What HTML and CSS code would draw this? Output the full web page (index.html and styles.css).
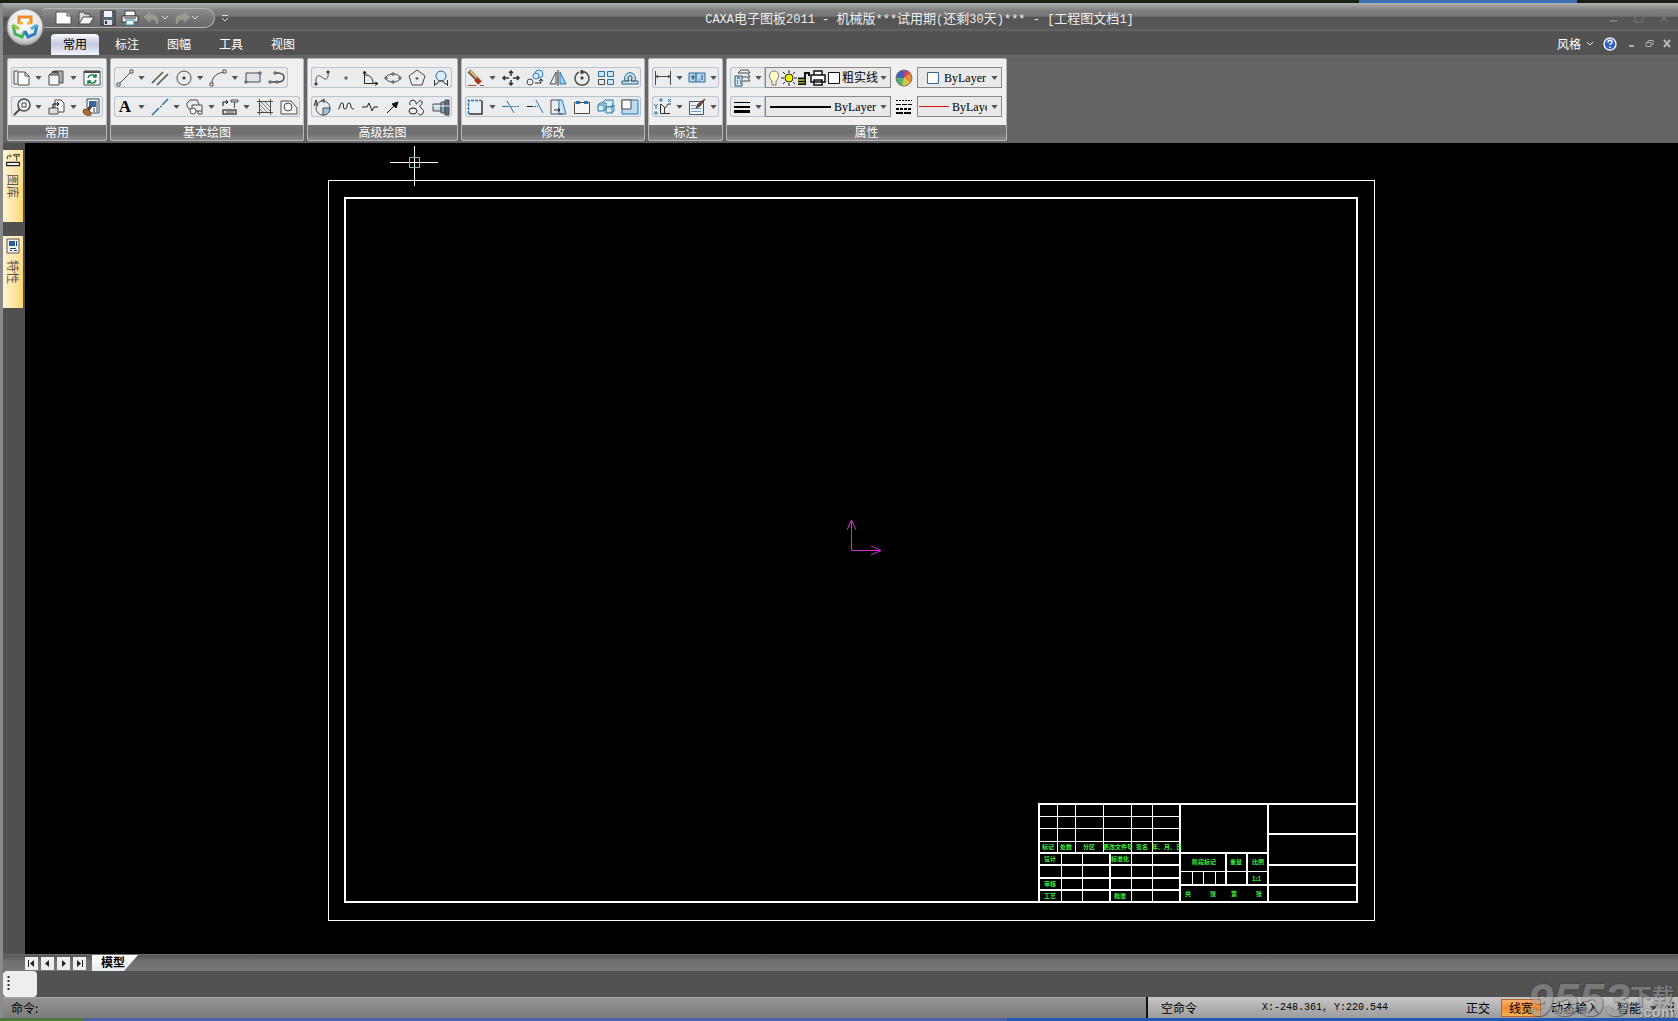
FILE: index.html
```html
<!DOCTYPE html>
<html lang="zh-CN">
<head>
<meta charset="utf-8">
<title>CAXA电子图板2011</title>
<link rel="stylesheet" href="styles.css">
</head>
<body>
<div class="desktop-top"></div>
<div class="window">
  <header class="titlebar">
    <button class="orb" aria-label="主菜单"><svg width="38" height="38" viewBox="0 0 38 38">
      <defs><radialGradient id="orb" cx=".5" cy=".35" r=".65"><stop offset="0" stop-color="#fff"/><stop offset=".7" stop-color="#e4e4e4"/><stop offset="1" stop-color="#a9a9a9"/></radialGradient></defs>
      <circle cx="19" cy="19" r="18" fill="url(#orb)" stroke="#8a8a8a"/>
      <g fill="none" stroke-width="3"><path d="M13 16V9h12v7" stroke="#ef8a2c"/><path d="M13 15h4M25 15h-4" stroke="#f5b63a"/><path d="M7 17l2 9 7 3 3-6" stroke="#45b45a"/><path d="M7 17l6 4" stroke="#9acb3c"/><path d="M31 17l-2 9-7 3-3-6" stroke="#2c7fc4"/><path d="M31 17l-6 4" stroke="#46b7d8"/></g></svg></button>
    <nav class="quick" aria-label="快速访问">
      <button aria-label="新建"><svg width="18" height="16" viewBox="0 0 18 16"><path d="M1 2h11l4 4v8H1z" fill="#fff" stroke="#555"/><path d="M12 2v4h4" fill="#ccc" stroke="#555"/></svg></button>
      <button aria-label="打开"><svg width="18" height="16" viewBox="0 0 18 16"><path d="M2 14V2h5l1 2h5v3" fill="#d8d8d8" stroke="#444"/><path d="M2 14l4-7h11l-4 7z" fill="#f4f4f4" stroke="#444"/></svg></button>
      <button aria-label="保存"><svg width="18" height="16" viewBox="0 0 18 16"><path d="M2 1h14v14H2z" fill="#5c6670" stroke="#333"/><path d="M5 1h8v6H5z" fill="#eef3f8"/><path d="M5 10h8v5H5z" fill="#dde"/><path d="M7 11v3" stroke="#333" stroke-width="2"/></svg></button>
      <button aria-label="打印"><svg width="18" height="16" viewBox="0 0 18 16"><path d="M4 1h10v5H4z" fill="#fff" stroke="#444"/><path d="M1 6h16v6H1z" fill="#eee" stroke="#333"/><path d="M5 10h8v5H5z" fill="#dff3f6" stroke="#3b8d98"/><path d="M3 8h12" stroke="#333"/></svg></button>
      <button class="pair" aria-label="撤销"><svg width="18" height="16" viewBox="0 0 18 16"><path d="M1 7l6-5v3c6-1 10 3 7 9-1-4-3-5-7-5v3z" fill="#9b998c" stroke="#9b998c"/></svg><svg class="chev" width="7" height="5" viewBox="0 0 7 5"><path d="M0 1l3 3 3-3" fill="none" stroke="#ddd"/></svg></button>
      <button class="pair" aria-label="重做"><svg width="18" height="16" viewBox="0 0 18 16"><path d="M17 7l-6-5v3c-6-1-10 3-7 9 1-4 3-5 7-5v3z" fill="#9b998c" stroke="#9b998c"/></svg><svg class="chev" width="7" height="5" viewBox="0 0 7 5"><path d="M0 1l3 3 3-3" fill="none" stroke="#ddd"/></svg></button>
    </nav>
    <button class="more" aria-label="自定义"><svg width="7" height="8" viewBox="0 0 7 8"><path d="M0 1.500h6M0 4l3 3 3-3" fill="none" stroke="#ddd"/></svg></button>
    <h1><span>CAXA</span>电子图板<span>2011 - </span>机械版<span>***</span>试用期<span>(</span>还剩<span>30</span>天<span>)*** - [</span>工程图文档<span>1]</span></h1>
    <div class="win-ctl">
      <button aria-label="最小化"><svg width="10" height="10"><path d="M1 8h7" stroke="#7d7d7d" stroke-width="2"/></svg></button>
      <button aria-label="最大化"><svg width="10" height="10"><path d="M1 1h8v8H1zM1 2h8" stroke="#777" fill="none"/></svg></button>
      <button aria-label="关闭"><svg width="10" height="10"><path d="M1 1l8 8M9 1l-8 8" stroke="#7d7d7d"/></svg></button>
    </div>
  </header>

  <nav class="tabs">
    <a class="tab active" href="#home">常用</a><a class="tab" href="#dim">标注</a><a class="tab" href="#sheet">图幅</a><a class="tab" href="#tools">工具</a><a class="tab" href="#view">视图</a>
    <div class="tab-right">
      <button class="style-btn">风格 <svg width="7" height="5" viewBox="0 0 7 5"><path d="M0 1l3 3 3-3" fill="none" stroke="#eee"/></svg></button>
      <button class="help" aria-label="帮助"><svg width="14" height="14" viewBox="0 0 14 14"><circle cx="7" cy="7" r="6" fill="#2e62c9" stroke="#e8efff" stroke-width="1.500"/><path d="M5 5.500c0-3 4-3 4-.500 0 1.500-2 1.500-2 3" fill="none" stroke="#fff" stroke-width="1.500"/><path d="M7 9.500v1.500" stroke="#fff" stroke-width="1.500"/></svg></button>
      <button aria-label="最小化文档"><svg width="9" height="9"><path d="M2 7h5" stroke="#aaa" stroke-width="2"/></svg></button>
      <button aria-label="还原文档"><svg width="9" height="9"><path d="M1 3.500h5v4H1zM3 3V1.500h5v4H6" stroke="#aaa" fill="none"/></svg></button>
      <button aria-label="关闭文档"><svg width="9" height="9"><path d="M1 1l6 7M7 1L1 8" stroke="#b5b5b5" stroke-width="2"/></svg></button>
    </div>
  </nav>

  <section class="ribbon" id="home">
    <section class="panel">
      <div class="rows">
        <div class="row">
          <button class="split" aria-label="复制"><svg class="i" viewBox="0 0 20 18"><path d="M6 2H2v13h3"/><path d="M6 3h7l4 4v9H6z" fill="#fff"/><path d="M13 3v4h4"/></svg><i></i></button>
          <button class="split" aria-label="粘贴"><svg class="i" viewBox="0 0 20 18"><path d="M7 4V2h9v12h-3z" fill="#aaa"/><path d="M2 6l4-3h5v4" fill="#999"/><path d="M2 6h10v10H2z" fill="#f5f5f5"/><path d="M5 3h6" stroke-width="2"/></svg><i></i></button>
          <button aria-label="刷新"><svg class="i" viewBox="0 0 20 18"><path d="M2 2h16v14H2z" fill="#fff"/><path d="M2 3h16" stroke-width="2"/><path d="M6 9c1-4 6-4 8-1M14 5v3h-3M14 11c-1 4-6 4-8 1M6 15v-3h3" stroke="#148044" stroke-width="1.500"/></svg></button>
        </div>
        <div class="row">
          <button class="split" aria-label="缩放"><svg class="i" viewBox="0 0 20 18"><circle cx="12" cy="7" r="6" fill="#eef4fa" stroke-width="1.500"/><path d="M10 5h4v4h-4z"/><path d="M8 11l-6 6" stroke-width="2"/></svg><i></i></button>
          <button class="split" aria-label="移动视图"><svg class="i" viewBox="0 0 20 18"><path d="M8 2h6l3 3v9H8z" fill="#f5f5f5"/><path d="M2 10h9v6H2z" fill="#ddd"/><path d="M6 10V6h6M10 4l2 2-2 2" stroke="#000"/></svg><i></i></button>
          <button aria-label="格式刷"><svg class="i" viewBox="0 0 20 18"><path d="M5 1h12v14H5z" fill="#fff" stroke="#345"/><path d="M7 3h7v6H7z" fill="#35679e" stroke="none"/><path d="M12 10v4M15 3v11" stroke="#345"/><path d="M9 8l-3 4" stroke="#444" stroke-width="3"/><path d="M2 11l6 2 1 4c-3 1-7 0-8-3z" fill="#b26c34" stroke="#8a4a1a"/></svg></button>
        </div>
      </div>
      <h2>常用</h2>
    </section>

    <section class="panel">
      <div class="rows">
        <div class="row short">
          <button class="split" aria-label="直线"><svg class="i" viewBox="0 0 20 18"><path d="M4 15L16 3" stroke="#554"/><path d="M2 14h3v3H2zM15 1h3v3h-3z" fill="#fff"/></svg><i></i></button>
          <button aria-label="平行线"><svg class="i" viewBox="0 0 20 18"><path d="M2 14L13 3M7 16L18 5" stroke="#554" stroke-width="1.500"/></svg></button>
          <button class="split" aria-label="圆"><svg class="i" viewBox="0 0 20 18"><circle cx="10" cy="9" r="7"/><path d="M9 8h2v2H9z" fill="#333"/></svg><i></i></button>
          <button class="split" aria-label="圆弧"><svg class="i" viewBox="0 0 20 18"><path d="M4 14C4 8 9 4 16 3"/><path d="M2 14h3v3H2zM15 1h3v3h-3z" fill="#fff"/></svg><i></i></button>
          <button aria-label="矩形"><svg class="i" viewBox="0 0 20 18"><path d="M3 4h14v9H3z" fill="#dfe2ea"/><path d="M2 12h2v2H2zM16 3h2v2h-2z" fill="#fff"/></svg></button>
          <button aria-label="多段线"><svg class="i" viewBox="0 0 20 18"><path d="M3 13h8c8 0 8-9 0-9H8" stroke-width="1.500"/><path d="M2 12h2v2H2zM9 12h2v2H9zM7 3h2v2H7z" fill="#fff"/></svg></button>
        </div>
        <div class="row">
          <button class="split" aria-label="文字"><b class="letter">A</b><i></i></button>
          <button class="split" aria-label="中心线"><svg class="i" viewBox="0 0 20 18"><path d="M2 17l7-7M12 7l6-6" stroke="#2b6cb0" stroke-width="1.500"/><path d="M10 8.500h1.500" stroke="#222"/></svg><i></i></button>
          <button class="split" aria-label="块"><svg class="i" viewBox="0 0 20 18"><path d="M5 2h7l2 4v5H4L2 8V5z"/><path d="M7 7h10v6H7z" fill="#eee"/><circle cx="8" cy="13" r="3" fill="#fff"/><path d="M13 13v3h4v-3"/></svg><i></i></button>
          <button class="split" aria-label="图库"><svg class="i" viewBox="0 0 20 18"><path d="M3 8V4h4M6 2l2 2-2 2" stroke="#111"/><path d="M11 2h7v2h-7zM14.500 4v6"/><path d="M3 12h13v4H3z" stroke-width="1.500"/><path d="M6 14h8"/></svg><i></i></button>
          <button aria-label="填充"><svg class="i" viewBox="0 0 20 18"><path d="M4.500 1v16M15.500 1v16M2 3.500h16M2 14.500h16"/><path d="M5 7l7 7M5 11l3 3M6 4l9 9M10 4l5 5" stroke="#777"/></svg></button>
          <button aria-label="局部放大"><svg class="i" viewBox="0 0 20 18"><path d="M2 3h10l6 7v6H2z" fill="#f4f4f4"/><circle cx="9" cy="9" r="4"/></svg></button>
        </div>
      </div>
      <h2>基本绘图</h2>
    </section>

    <section class="panel">
      <div class="rows inset">
        <div class="row">
          <button aria-label="样条"><svg class="i" viewBox="0 0 20 18"><path d="M4 15C3 3 9 7 11 9s6 2 5-6"/><path d="M3 14h2v2H3zM15 2h2v2h-2z" fill="#222"/></svg></button>
          <button aria-label="点"><svg class="i" viewBox="0 0 20 18"><path d="M9 8h2v2H9z"/></svg></button>
          <button aria-label="公式曲线"><svg class="i" viewBox="0 0 20 18"><path d="M4.500 2v12.500H18M3 5l1.500-3 2 3M15 13l3 1.500-3 2M5 6c5 0 8 3 8 8" stroke="#222"/></svg></button>
          <button aria-label="椭圆"><svg class="i" viewBox="0 0 20 18"><ellipse cx="10" cy="9" rx="7" ry="4"/><path d="M2 8h2v2H2zM16 8h2v2h-2zM9 4h2v2H9zM9 12h2v2H9z" fill="#fff"/></svg></button>
          <button aria-label="正多边形"><svg class="i" viewBox="0 0 20 18"><path d="M10 1l8 6-3 9H5L2 7z"/><path d="M9 9h2v1H9z" fill="#222"/></svg></button>
          <button aria-label="圆弧齿形"><svg class="i" viewBox="0 0 20 18"><circle cx="10" cy="7" r="5" fill="#d9eefc" stroke="#2d6796"/><path d="M3.500 11v6M16.500 11v6M3 15h3l2-3h4l2 3h3" stroke="#333"/></svg></button>
        </div>
        <div class="row">
          <button aria-label="圆弧标记"><svg class="i" viewBox="0 0 20 18"><circle cx="11" cy="10" r="7"/><path d="M11 10h7c0 4-2 7-7 7z" fill="#9ec4dd"/><path d="M2 8l2-6 2 6M3 6h2M9 3l3-2v4" stroke="#333"/></svg></button>
          <button aria-label="波浪线"><svg class="i" viewBox="0 0 20 18"><path d="M2 11c3 0 1-6 4-6s0 6 3 6 1-6 4-6 0 6 5 6" stroke="#222"/></svg></button>
          <button aria-label="折断线"><svg class="i" viewBox="0 0 20 18"><path d="M2 9h5l2-4 3 8 2-4h4" stroke="#222"/></svg></button>
          <button aria-label="箭头"><svg class="i" viewBox="0 0 20 18"><path d="M4 15l8-8" stroke="#111"/><path d="M15 4l-2 6-4-4z" fill="#111" stroke="#111"/></svg></button>
          <button aria-label="轮廓"><svg class="i" viewBox="0 0 20 18"><path d="M3 7c-2-6 6-6 6-2s4-6 6-1c1 3-4 3-1 6s3 2 2 5-4 2-5 0" stroke="#222"/><ellipse cx="6" cy="13" rx="4" ry="3" stroke="#222"/></svg></button>
          <button aria-label="轴孔"><svg class="i" viewBox="0 0 20 18"><path d="M2 6h8v7H2z" fill="#c9d7df"/><path d="M10 4h4v11h-4z" fill="#8ca8b8"/><path d="M14 2h4v15h-4z" fill="#4f7187"/><path d="M2 8h16" stroke="#f5f5f5"/></svg></button>
        </div>
      </div>
      <h2>高级绘图</h2>
    </section>

    <section class="panel">
      <div class="rows">
        <div class="row">
          <button class="split" aria-label="删除"><svg class="i" viewBox="0 0 20 18"><path d="M3 2l8 8" stroke="#6b5836" stroke-width="4"/><path d="M4 2l7 7" stroke="#e5bd76" stroke-width="2"/><path d="M10 10l4 4" stroke="#a33a1d" stroke-width="5"/><path d="M2 16.500h8M14 16.500h4" stroke="#b3492a"/></svg><i></i></button>
          <button aria-label="平移"><svg class="i" viewBox="0 0 20 18"><path d="M10 2v5M10 11v5M3 9h5M12 9h5M8 4l2-2 2 2M8 14l2 2 2-2M4 7L2 9l2 2M16 7l2 2-2 2" stroke="#333" stroke-width="1.500"/></svg></button>
          <button aria-label="平移复制"><svg class="i" viewBox="0 0 20 18"><circle cx="14" cy="5" r="4" fill="#d6ecfa" stroke="#2d78b0"/><circle cx="11" cy="7" r="3" fill="#d6ecfa" stroke="#2d78b0"/><circle cx="5" cy="13" r="3"/><path d="M10 14h6v-3M14 12l2-2 2 2" stroke="#222"/></svg></button>
          <button aria-label="镜像"><svg class="i" viewBox="0 0 20 18"><path d="M8 3v12H2z"/><path d="M12 3v12h6z" fill="#9fd0ee" stroke="#2d78b0"/><path d="M10 1v16" stroke="#222"/></svg></button>
          <button aria-label="旋转"><svg class="i" viewBox="0 0 20 18"><path d="M13 3a7 7 0 1 1-6 0" stroke-width="1.500"/><path d="M9 1l4 2-4 2z" fill="#333"/><path d="M9 8h2v2H9z" fill="#222"/></svg></button>
          <button aria-label="阵列"><svg class="i" viewBox="0 0 20 18"><path d="M2.500 2.500h6v5h-6zM11.500 2.500h6v5h-6zM11.500 10.500h6v5h-6z" fill="#c9e6f8" stroke="#2874a8"/><path d="M2.500 10.500h6v5h-6z"/></svg></button>
          <button aria-label="等距线"><svg class="i" viewBox="0 0 20 18"><path d="M2 15h16v-3h-3c3-11-13-11-10 0H2z" fill="#c9e6f8" stroke="#235f8b"/><path d="M5 12h4c-4-7 6-7 2 0h4" stroke="#222"/></svg></button>
        </div>
        <div class="row">
          <button class="split" aria-label="裁剪"><svg class="i" viewBox="0 0 20 18"><path d="M3 3h13v13H3z" fill="#e6f0f8" stroke="none"/><path d="M3 16h13V3" stroke="#333" stroke-width="1.500"/><path d="M2.500 16V2.500H17" stroke="#2775ae" stroke-width="1.500" stroke-dasharray="3 1"/></svg><i></i></button>
          <button aria-label="打断"><svg class="i" viewBox="0 0 20 18"><path d="M1 8.500h7M6 3l7 12" stroke="#2775ae"/><path d="M10 8.500h8" stroke="#2775ae" stroke-dasharray="2 1"/></svg></button>
          <button aria-label="延伸"><svg class="i" viewBox="0 0 20 18"><path d="M2 8.500h6" stroke="#222"/><path d="M9 8.500h4" stroke="#2775ae" stroke-dasharray="2 1"/><path d="M11 2l7 13" stroke="#2775ae"/></svg></button>
          <button aria-label="拉伸"><svg class="i" viewBox="0 0 20 18"><path d="M11 2h3l4 14h-7z" fill="#c9e6f8" stroke="#2775ae"/><path d="M11 2H3v14h12"/><path d="M6 12h6M10 10l2 2-2 2" stroke="#222"/></svg></button>
          <button aria-label="过渡"><svg class="i" viewBox="0 0 20 18"><path d="M4 4.500H2.500v11h15v-11H16" fill="#f4f4f4"/><path d="M8 4.500h4"/><path d="M4 3h4v3H4zM12 3h4v3h-4z" fill="#2874a8" stroke="none"/></svg></button>
          <button aria-label="分解"><svg class="i" viewBox="0 0 20 18"><path d="M6 5l3-3h8v5l-3 2H6z" fill="#d9edf9" stroke="#2874a8"/><path d="M2 7h6v6H2zM10 9h6v6h-6zM16 9l2-2v6l-2 2M2 7l2-2h6v6l-2 2" fill="#d9edf9" stroke="#2874a8"/></svg></button>
          <button aria-label="缩放图形"><svg class="i" viewBox="0 0 20 18"><path d="M2 2h16v14H2z" fill="#b9dcf2" stroke="#2874a8"/><path d="M2 2h9v9H2z" fill="#fff"/></svg></button>
        </div>
      </div>
      <h2>修改</h2>
    </section>

    <section class="panel">
      <div class="rows">
        <div class="row">
          <button class="split" aria-label="尺寸标注"><svg class="i" viewBox="0 0 20 18"><path d="M2.500 2v14M17.500 2v14M3 7.500h14M5 6L3 7.500l2 1.500M15 6l2 1.500-2 1.500"/></svg><i></i></button>
          <button class="split" aria-label="形位公差"><svg class="i" viewBox="0 0 20 18"><path d="M2 4h16v9H2z" fill="#b5d4ec" stroke="#2e6a9a"/><path d="M9 4v9M4 8h4M6 6v5M12 11h1M15 6v5" stroke="#174a75"/></svg><i></i></button>
        </div>
        <div class="row">
          <button class="split" aria-label="坐标标注"><svg class="i" viewBox="0 0 20 18"><path d="M7.500 6v9.500H17M8 6l4 4 3-4h3M11.500 10v5" stroke="#333"/><path d="M7 1h2v2H7zM2 14h2v2H2zM15 1l3 3M18 1l-3 3M1 6l2 2 2-2M3 8v3" stroke="#2874a8"/></svg><i></i></button>
          <button class="split" aria-label="标注编辑"><svg class="i" viewBox="0 0 20 18"><path d="M2.500 3.500h14v13h-14z" fill="#eef5fb" stroke="#456"/><path d="M4 7.500h5M4 10.500h10M4 13.500h10" stroke="#6c9cc2"/><path d="M9 10l2-4 7-5-5 7z" fill="#8b4a2b" stroke="#533"/></svg><i></i></button>
        </div>
      </div>
      <h2>标注</h2>
    </section>

    <section class="panel">
      <div class="rows props">
        <div class="prop-row">
          <button class="split cell" aria-label="图层"><svg class="i" viewBox="0 0 20 18"><path d="M6 4l3-3h7l2 3zM9 8h9l-2-3M11 12h7l-2-3"/><path d="M3 7h7v10H3z" fill="#cfe4f3" stroke="#356"/><path d="M5 9h3M5 12h1M8 12h1M5 14h1M8 14h1" stroke="#135"/></svg><i></i></button>
          <label class="combo layer"><select aria-label="当前图层"><option>粗实线</option></select>
            <svg width="72" height="18" viewBox="0 0 72 18"><path d="M4 12c-5-5-2-10 2-10s7 5 2 10v4H4z" fill="#fff8c8" stroke="#777"/><circle cx="21" cy="9" r="4" fill="#f5f500" stroke="#222"/><path d="M21 1v3M21 14v3M13 9h3M26 9h3M15 3l2 2M25 13l2 2M27 3l-2 2M15 15l2-2" stroke="#222"/><path d="M30 9.500h8M30 12.500h8M30 15h8M37 14V4h4v3" fill="none" stroke="#111" stroke-width="2"/><path d="M30 11h7M30 14h7" stroke="#aa0"/><path d="M46 6V2h8v4M43 6h14v7H43zM46 11h8v5h-8z" fill="#fff" stroke="#111" stroke-width="1.500"/><path d="M60.500 3.500h11v11h-11z" fill="#fff" stroke="#111"/></svg><i></i></label>
          <button class="ico" aria-label="颜色"><svg class="i" viewBox="0 0 20 18"><g stroke="none"><path d="M10 9V1a8 8 0 0 1 7 4z" fill="#df5c2b"/><path d="M10 9l7-4a8 8 0 0 1-1 9z" fill="#e78d3b"/><path d="M10 9l6 5a8 8 0 0 1-8 3z" fill="#d8c83a"/><path d="M10 9l-2 8a8 8 0 0 1-6-8z" fill="#57b06b"/><path d="M10 9H2a8 8 0 0 1 8-8z" fill="#4062be"/><path d="M10 9V1a8 8 0 0 1 4 1z" fill="#c33a87"/></g><circle cx="10" cy="9" r="8" stroke="#777"/></svg></button>
          <label class="combo color"><select aria-label="颜色设置"><option>ByLayer</option></select>
            <svg width="14" height="14"><path d="M1.500 1.500h11v11h-11z" fill="#fff" stroke="#336699"/></svg><i></i></label>
        </div>
        <div class="prop-row">
          <button class="split cell" aria-label="线宽"><svg class="i" viewBox="0 0 20 18"><path d="M2 4.500h16" stroke="#000"/><path d="M2 9h16" stroke="#000" stroke-width="2"/><path d="M2 13.500h16" stroke="#000" stroke-width="3"/></svg><i></i></button>
          <label class="combo width"><select aria-label="线宽设置"><option>ByLayer</option></select>
            <svg width="61" height="4"><path d="M0 2h61" stroke="#000" stroke-width="2"/></svg><i></i></label>
          <button class="ico" aria-label="线型"><svg class="i" viewBox="0 0 20 18"><path d="M2 2.500h16" stroke="#000" stroke-dasharray="2 1"/><path d="M2 6.500h16" stroke="#000" stroke-dasharray="5 1"/><path d="M2 11h16" stroke="#000" stroke-width="2" stroke-dasharray="3 1"/><path d="M2 15h16" stroke="#000" stroke-width="2" stroke-dasharray="7 1"/></svg></button>
          <label class="combo type"><select aria-label="线型设置"><option>ByLayer</option></select>
            <svg class="red-line" width="30" height="3"><path d="M0 1.500h30" stroke="#e01010"/></svg><i></i></label>
        </div>
      </div>
      <h2>属性</h2>
    </section>
  </section>

  <main class="work">
    <aside class="dock">
      <button class="dock-tab"><svg width="16" height="16" viewBox="0 0 20 18" fill="none" stroke="#222"><path d="M3 8V4h4M6 2l2 2-2 2"/><path d="M11 2h7v2h-7zM14.500 4v6"/><path d="M2 12h16v4H2z" stroke-width="1.500" fill="#eee"/></svg><span>图库</span></button>
      <button class="dock-tab"><svg width="14" height="16" viewBox="0 0 14 16" fill="none"><path d="M1 1h12v14H1z" fill="#f4f4ee" stroke="#555"/><path d="M3 3h6v5H3z" fill="#2d5f96"/><path d="M10.500 3v5M4 10.500h6M4 12.500h2M8 12.500h3" stroke="#246"/></svg><span>特性</span></button>
    </aside>
    <svg class="sheet" viewBox="25 143 1653 811" role="img" aria-label="工程图">
      <g fill="none" stroke="#fff" shape-rendering="crispEdges">
        <path d="M328.500 180.500H1374.500V920.500H328.500z"/>
        <path d="M345 198H1357V902H345z" stroke-width="2"/>
        <path d="M1039 902V804H1357M1180 804V902M1268 804V902M1039 853H1268M1039 865H1180M1039 878H1180M1039 890H1180M1110 853V902M1180 885H1268M1226 853V885M1247 853V885M1268 834H1357M1268 865H1357M1268 885H1357" stroke-width="2"/>
        <path d="M1039 816.500H1180M1039 828.500H1180M1039 841.500H1180M1057.500 804V853M1075.500 804V853M1103.500 804V853M1131.500 804V902M1152.500 804V902M1061.500 853V902M1082.500 853V902M1180 871.500H1268M1192.500 871V885M1203.500 871V885M1215.500 871V885"/>
        <path d="M390 162.500H438M414.500 146V186"/>
        <path d="M409.500 157.500h10v10h-10z" stroke="#79c596"/>
      </g>
      <path d="M851.500 521V550.500H881M847 530l4.500-10 4.500 10M871 546l10 4.500-10 4.500" fill="none" stroke="#d32bd3"/>
      <g class="cells">
        <text x="1042" y="849">标记</text><text x="1060" y="849">处数</text><text x="1083" y="849">分区</text><text x="1103" y="849">更改文件号</text><text x="1136" y="849">签名</text><text x="1152" y="849">年、月、日</text>
        <text x="1044" y="861">设计</text><text x="1111" y="861">标准化</text><text x="1044" y="886">审核</text><text x="1044" y="898">工艺</text><text x="1114" y="898">批准</text>
        <text x="1192" y="864">阶段标记</text><text x="1230" y="864">重量</text><text x="1252" y="864">比例</text><text x="1252" y="881">1:1</text>
        <text x="1185" y="896">共</text><text x="1210" y="896">张</text><text x="1231" y="896">第</text><text x="1256" y="896">张</text>
      </g>
    </svg>
  </main>

  <div class="pages">
    <button aria-label="首页"><svg width="13" height="13"><path d="M3.500 3v7" stroke="#222"/><path d="M9 3v7L5 6.500z" fill="#222"/></svg></button>
    <button aria-label="上一页"><svg width="13" height="13"><path d="M8 3v7L4 6.500z" fill="#222"/></svg></button>
    <button aria-label="下一页"><svg width="13" height="13"><path d="M5 3v7l4-3.500z" fill="#222"/></svg></button>
    <button aria-label="末页"><svg width="13" height="13"><path d="M9.500 3v7" stroke="#222"/><path d="M4 3v7l4-3.500z" fill="#222"/></svg></button>
    <a class="page-tab" href="#model">模型</a>
  </div>
  <div class="toolrow"><div class="grip"><svg width="3" height="15"><path d="M1.500 0v15" stroke="#333" stroke-width="2" stroke-dasharray="2 2"/></svg></div></div>
  <footer class="status">
    <label class="cmd">命令: <input type="text" aria-label="命令"></label>
    <div class="info">
      <span class="state">空命令</span>
      <output class="coords">X:-248.361, Y:220.544</output>
      <button class="ortho">正交</button><button class="on">线宽</button><button class="dyn">动态输入</button><button>智能</button>
      <button class="snap" aria-label="捕捉方式"><svg width="7" height="4"><path d="M0 0h7L4 4H3z" fill="#444"/></svg></button>
      <svg class="resize" width="7" height="11"><path d="M5 0h2v2H5zM5 4h2v2H5zM5 8h2v2H5zM1 4h2v2H1zM1 8h2v2H1z" fill="#333"/></svg>
    </div>
  </footer>
</div>
<div class="desktop-bottom"></div>
<div class="mark"><em>9553</em><div><b>下载</b><strong>.com</strong></div></div>
</body>
</html>
```

FILE: styles.css
```css
* { box-sizing: border-box; }
body {
  margin: 0;
  min-height: 100vh;
  display: flex;
  flex-direction: column;
  position: relative;
  overflow: hidden;
  background: #525252;
  font: 12px/14px "Noto Sans CJK SC", sans-serif;
  color: #fff;
}
button, input, select { font: inherit; color: inherit; margin: 0; padding: 0; border: 0; background: none; border-radius: 0; }
button { display: flex; align-items: center; justify-content: center; flex: none; }
a { color: inherit; text-decoration: none; }
h1, h2 { margin: 0; font-weight: 400; }
svg { display: block; flex: none; }

.desktop-top { height: 3px; background: linear-gradient(90deg, #18200f 0 81%, #3e70b4 81% 94%, #1c1c14 94%); }
.desktop-bottom { height: 3px; background: linear-gradient(90deg, #4c7a3c 0 5%, #4a62a8 5% 60%, #2458b8 60%); }
.window { flex: 1; display: flex; flex-direction: column; border-left: 3px solid #8a8a8a; }

/* Title bar */
.titlebar {
  position: relative;
  display: flex;
  align-items: center;
  height: 29px;
  background: linear-gradient(#b0b0b0 0, #808080 25%, #747474 45%, #545454 50%, #575757 88%, #666 92%, #525252);
}
.orb { position: absolute; left: 3px; top: 5px; z-index: 2; }
.quick {
  display: flex;
  align-items: center;
  gap: 4px;
  height: 20px;
  width: 173px;
  margin-left: 39px;
  padding: 0 8px 0 13px;
  border: 1px solid #b4b4b4;
  border-left: 0;
  border-radius: 4px 10px 10px 4px;
  background: linear-gradient(#8f8f8f, #777 50%, #686868);
}
.pair { gap: 1px; }
.more { margin-left: 7px; }
.titlebar h1 { position: absolute; left: 0; right: 0; text-align: center; font-size: 13px; line-height: 18px; pointer-events: none; color: #eee; padding: 2px 0 0 158px; }
.titlebar h1 span { font-family: "Liberation Mono", monospace; font-size: 12px; white-space: pre; }
.win-ctl { margin-left: auto; display: flex; gap: 15px; padding-right: 9px; }

/* Ribbon tabs */
.tabs { display: flex; align-items: flex-end; gap: 4px; height: 25px; padding-left: 48px; border-bottom: 2px solid #686868; }
.tab { width: 48px; height: 21px; text-align: center; line-height: 19px; }
.tab.active { background: linear-gradient(#fff, #d5daea 30%, #c4cbe2 50%, #f4f5fb); color: #000; border-radius: 4px 4px 0 0; }
.tab-right { margin-left: auto; align-self: center; display: flex; align-items: center; gap: 9px; padding-right: 6px; }
.style-btn { gap: 6px; }
.help { margin-right: 1px; }

/* Ribbon */
.ribbon { display: grid; grid-template-columns: 100px 194px 151px 184px 75px 281px; gap: 3px; padding: 1px 0 2px 4px; background: #646464; }
.panel { display: flex; flex-direction: column; height: 83px; border: 1px solid #b8b8b8; border-radius: 2px; background: #f0f0f0; overflow: hidden; }
.rows { flex: 1; display: flex; flex-direction: column; gap: 8px; padding: 8px 3px; color: #000; }
.rows.inset { padding-right: 5px; }
.row { display: flex; align-items: center; justify-content: space-between; height: 21px; border-radius: 3px; background: #eaecee; box-shadow: inset 0 0 0 1px #b9c3cd; }
.row.short { margin-right: 12px; }
.i { width: 20px; height: 18px; margin: 0 1px; fill: none; stroke: #4a4a4a; }
.split i, .combo i { width: 11px; height: 4px; flex: none; background: #555; clip-path: polygon(2px 0, 9px 0, 6px 4px, 5px 4px); }
.letter { width: 22px; font: bold 17px/18px "Liberation Serif", serif; }
.panel h2 { flex: none; height: 15px; font-size: 12px; line-height: 14px; text-align: center; background: linear-gradient(#777, #6e6e6e 50%, #8a8a8a); }

.prop-row { display: flex; height: 21px; align-items: stretch; }
.cell { width: 35px; background: #eaecee; box-shadow: inset 0 0 0 1px #b9c3cd; border-radius: 3px 0 0 3px; }
.ico { width: 26px; }
.combo { display: grid; align-items: center; background: #e9e9e9; border: 1px solid #888; }
.combo > * { grid-area: 1 / 1; }
.combo svg, .combo i { pointer-events: none; z-index: 1; }
.combo i { justify-self: end; margin-right: 1px; }
.combo select { appearance: none; width: 100%; height: 100%; font-family: "Liberation Serif", "Noto Sans CJK SC", serif; font-size: 12px; }
.layer, .width { width: 126px; }
.color, .type { width: 85px; }
.layer svg { margin-left: 2px; }
.layer select { padding-left: 76px; }
.color svg { margin-left: 8px; }
.color select { padding-left: 26px; }
.width svg { margin-left: 4px; }
.width select { padding-left: 68px; }
.type svg { margin-left: 1px; }
.type select { padding: 0 14px 0 34px; }

/* Work area */
.work { flex: 1; display: flex; min-height: 0; background: #000; }
.dock { width: 22px; flex: none; padding-top: 7px; display: flex; flex-direction: column; gap: 14px; background: #505050; }
.dock-tab { flex-direction: column; justify-content: flex-start; gap: 6px; width: 20px; height: 72px; padding-top: 2px; color: #555; background: linear-gradient(#fff3cf80, #ffe3a000 50%), linear-gradient(90deg, #fff3cf, #ffe3a0 60%, #ffd773); }
.dock-tab span { writing-mode: vertical-rl; text-orientation: sideways; }
.sheet { flex: 1; min-width: 0; width: 100%; height: auto; }
.cells text { font: bold 6px "Noto Sans CJK SC", sans-serif; fill: #3cf03c; }

/* Page tabs */
.pages { display: flex; align-items: center; gap: 3px; height: 17px; padding-left: 22px; border-top: 1px solid #6c6c6c; background: linear-gradient(#555, #717171 40%, #777); }
.pages button { background: #eee; }
.page-tab { width: 46px; height: 16px; margin-left: 3px; padding-left: 9px; font-weight: 700; line-height: 14px; color: #000; background: linear-gradient(#fff, #e6ebee); clip-path: polygon(0 0, 100% 0, 32px 100%, 0 100%); }
.toolrow { height: 26px; background: #525252; }
.grip { width: 34px; height: 26px; padding: 5px 4px; border-radius: 4px; background: #eee; }

/* Status bar */
.status { display: flex; height: 21px; color: #000; }
.cmd { flex: 1; display: flex; align-items: center; padding-left: 8px; border-top: 1px solid #aaa; background: linear-gradient(#949494, #7c7c7c); }
.cmd input { flex: 1; min-width: 0; outline: 0; }
.info { display: flex; align-items: center; width: 532px; padding-left: 13px; border-left: 2px solid #111; background: linear-gradient(#c6c6c6, #9c9c9c); }
.state { width: 101px; }
.coords { width: 196px; font-family: "Liberation Mono", monospace; font-size: 10px; }
.info button { width: 40px; height: 18px; }
.info .ortho { margin-right: 3px; }
.info .on { background: linear-gradient(#ffb070, #f58a32 50%, #ffb257); border: 1px solid #b5652a; }
.info .dyn { width: 68px; }
.info .snap { width: 8px; }
.resize { margin-left: auto; margin-right: 4px; }

/* Site mark over the lower right corner */
.mark { position: absolute; right: 4px; bottom: 2px; display: flex; align-items: flex-end; color: #a0a0a0; opacity: .5; text-shadow: 0 0 2px #222, 1px 1px 0 #444; pointer-events: none; }
.mark em { font: italic bold 46px/38px "Liberation Sans", sans-serif; }
.mark div { display: flex; flex-direction: column; align-items: flex-end; }
.mark b { font-size: 22px; line-height: 22px; }
.mark strong { font: bold 15px/14px "Liberation Sans", sans-serif; color: #ddd; }
```
